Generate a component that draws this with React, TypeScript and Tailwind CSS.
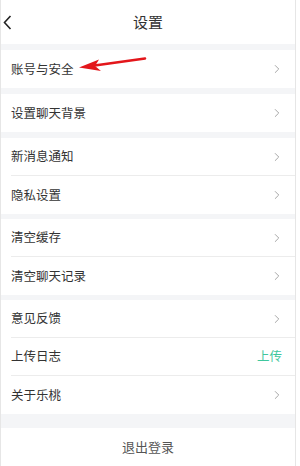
import { ChevronRight } from "lucide-react";

type Row = { label: string; value?: string };

const groups: { gap: string; rows: Row[] }[] = [
  { gap: "mt-[6px]", rows: [{ label: "账号与安全" }] },
  { gap: "mt-[6px]", rows: [{ label: "设置聊天背景" }] },
  { gap: "mt-[6px]", rows: [{ label: "新消息通知" }, { label: "隐私设置" }] },
  { gap: "mt-[5px]", rows: [{ label: "清空缓存" }, { label: "清空聊天记录" }] },
  {
    gap: "mt-[5px]",
    rows: [{ label: "意见反馈" }, { label: "上传日志", value: "上传" }, { label: "关于乐桃" }],
  },
];

function SettingRow({ row, last }: { row: Row; last: boolean }) {
  return (
    <div className="bg-white pl-[10px]">
      <div
        className={`flex h-[38px] items-center justify-between pr-[11px] ${
          last ? "" : "border-b border-[#ececec]"
        }`}
      >
        <span className="text-[12.5px] text-[#333]">{row.label}</span>
        {row.value ? (
          <span className="pr-[2px] text-[12.5px] text-[#3fc79d]">{row.value}</span>
        ) : (
          <ChevronRight className="size-[14px] text-[#9a9a9a]" strokeWidth={1.5} />
        )}
      </div>
    </div>
  );
}

export default function App() {
  return (
    <div
      className="h-[466px] w-[300px] overflow-hidden bg-white"
      style={{ fontFamily: '"Noto Sans CJK SC", "Noto Sans", sans-serif' }}
    >
      <div className="relative flex h-[466px] w-[296px] flex-col border-x border-b border-[#e6e6e6] bg-[#f4f5f7]">
        <header className="relative flex h-[44px] shrink-0 items-center justify-center bg-white">
          <svg
            className="absolute left-[2px] top-[15px]"
            width="9"
            height="15"
            viewBox="0 0 9 15"
            fill="none"
          >
            <path d="M7.5 1 L1.5 7.5 L7.5 14" stroke="#222" strokeWidth="1.6" />
          </svg>
          <h1 className="text-[15px] text-[#333]">设置</h1>
        </header>

        {groups.map((group, gi) => (
          <div key={gi} className={`flex flex-col ${group.gap}`}>
            {group.rows.map((row, ri) => (
              <SettingRow key={row.label} row={row} last={ri === group.rows.length - 1} />
            ))}
          </div>
        ))}

        <div className="mt-[14px] flex h-[38px] shrink-0 items-center justify-center bg-white">
          <span className="text-[13px] text-[#555]">退出登录</span>
        </div>

        {/* red annotation arrow */}
        <svg
          className="absolute left-[76px] top-[56px]"
          width="72"
          height="16"
          viewBox="0 0 72 16"
          fill="none"
        >
          <path d="M68 2.5 L14 10" stroke="#e3161b" strokeWidth="2.6" strokeLinecap="round" />
          <path d="M2 11.5 L22 3.5 L18 10 L24 15 Z" fill="#e3161b" />
        </svg>
      </div>
    </div>
  );
}
